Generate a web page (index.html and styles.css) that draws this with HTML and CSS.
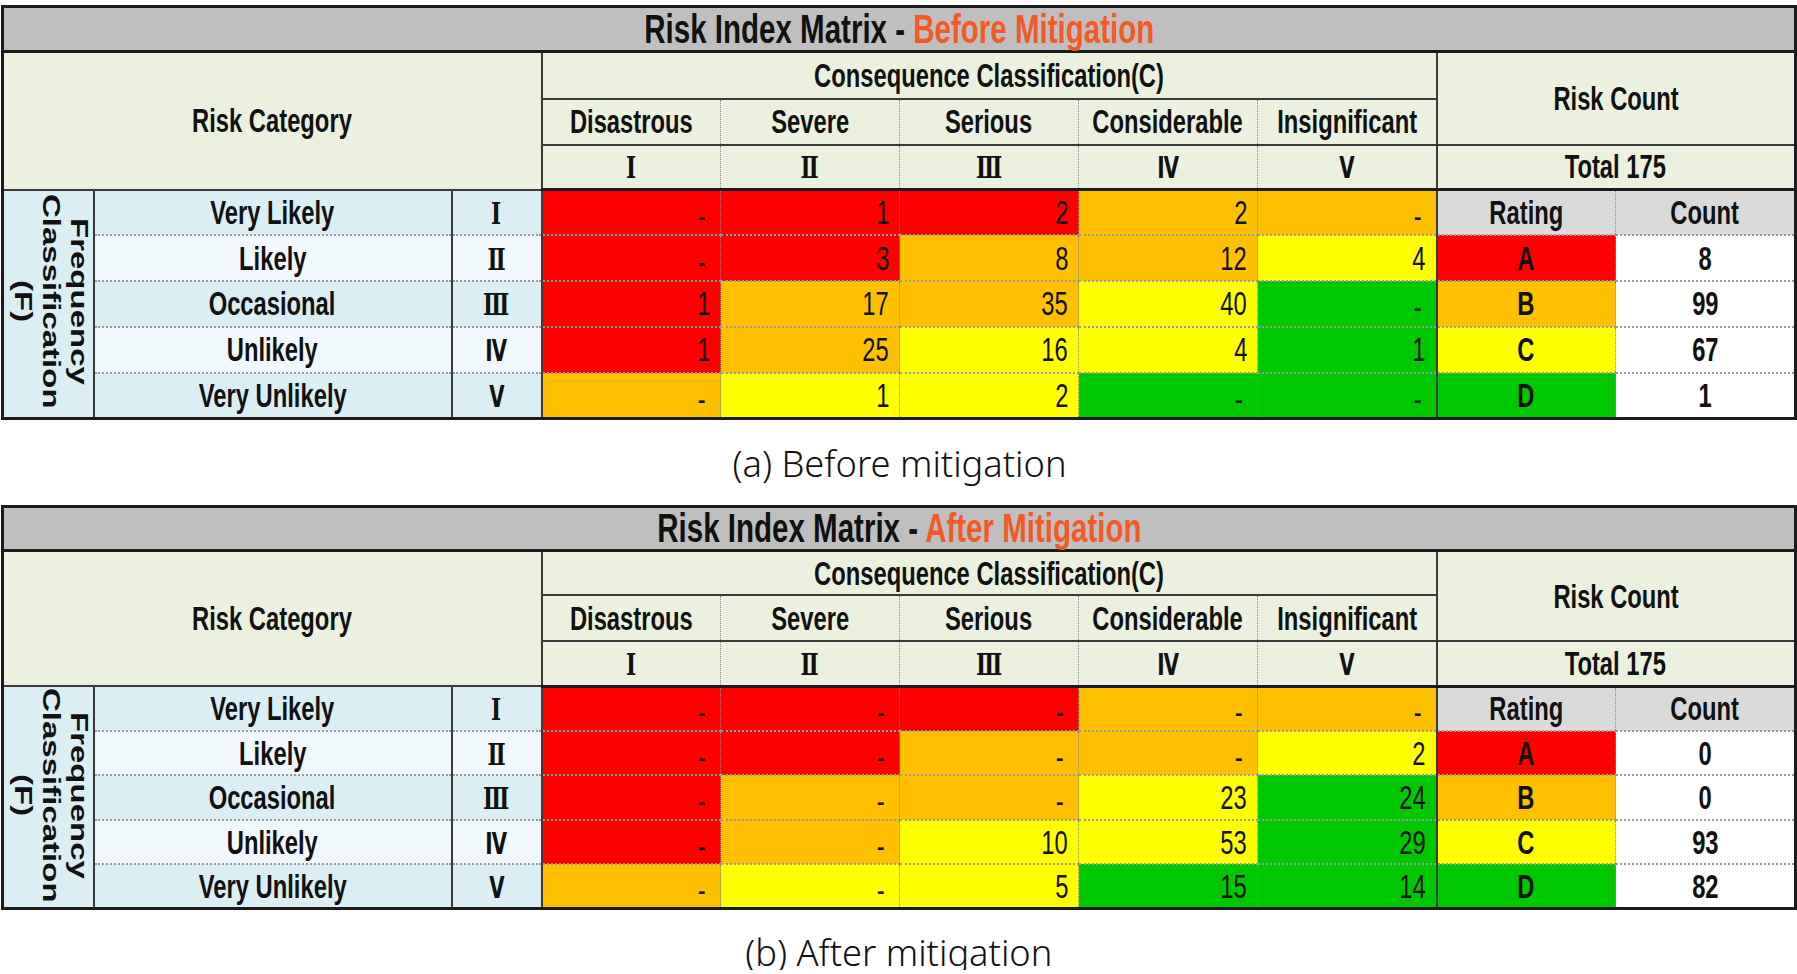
FILE: index.html
```html
<!DOCTYPE html>
<html lang="en">
<head>
<meta charset="utf-8">
<title>Risk Index Matrix</title>
<link rel="stylesheet" href="styles.css">
</head>
<body>
<div class="page">

<section class="fig fig-a">
<table class="matrix m1">
<colgroup>
<col class="c-freq"><col class="c-cat"><col class="c-rom">
<col class="c-con"><col class="c-con"><col class="c-con"><col class="c-con"><col class="c-con">
<col class="c-rat"><col class="c-cnt">
</colgroup>
<tr class="r-title"><th colspan="10" class="title"><span class="sq">Risk Index Matrix - <span class="hl">Before Mitigation</span></span></th></tr>
<tr class="r-h1">
<th colspan="3" rowspan="3" class="hd rc"><span class="sq">Risk Category</span></th>
<th colspan="5" class="hd cons"><span class="sq">Consequence Classification(C)</span></th>
<th colspan="2" rowspan="2" class="hd rcount"><span class="sq">Risk Count</span></th>
</tr>
<tr class="r-h2">
<th class="hd cn"><span class="sq">Disastrous</span></th>
<th class="hd cn"><span class="sq">Severe</span></th>
<th class="hd cn"><span class="sq">Serious</span></th>
<th class="hd cn"><span class="sq">Considerable</span></th>
<th class="hd cn"><span class="sq">Insignificant</span></th>
</tr>
<tr class="r-h3">
<th class="hd rn"><span class="sq rs">Ⅰ</span></th>
<th class="hd rn"><span class="sq rs">Ⅱ</span></th>
<th class="hd rn"><span class="sq rs">Ⅲ</span></th>
<th class="hd rn"><span class="sq rp">Ⅳ</span></th>
<th class="hd rn"><span class="sq rp">Ⅴ</span></th>
<th colspan="2" class="hd total"><span class="sq">Total 175</span></th>
</tr>
<tr class="r-d odd">
<th rowspan="5" class="freq"><div class="vt">Frequency<br>Classification<br>(F)</div></th>
<th class="cat"><span class="sq">Very Likely</span></th><th class="rom"><span class="sq rs">Ⅰ</span></th>
<td class="v red"><span class="sq dash">-</span></td><td class="v red"><span class="sq">1</span></td><td class="v red"><span class="sq">2</span></td><td class="v org"><span class="sq">2</span></td><td class="v org last"><span class="sq dash">-</span></td>
<th class="rh rat"><span class="sq">Rating</span></th><th class="rh cnt"><span class="sq">Count</span></th>
</tr>
<tr class="r-d even">
<th class="cat"><span class="sq">Likely</span></th><th class="rom"><span class="sq rs">Ⅱ</span></th>
<td class="v red"><span class="sq dash">-</span></td><td class="v red"><span class="sq">3</span></td><td class="v org"><span class="sq">8</span></td><td class="v org"><span class="sq">12</span></td><td class="v yel last"><span class="sq">4</span></td>
<td class="rt red"><span class="sq">A</span></td><td class="ct"><span class="sq">8</span></td>
</tr>
<tr class="r-d odd">
<th class="cat"><span class="sq">Occasional</span></th><th class="rom"><span class="sq rs">Ⅲ</span></th>
<td class="v red"><span class="sq">1</span></td><td class="v org"><span class="sq">17</span></td><td class="v org"><span class="sq">35</span></td><td class="v yel"><span class="sq">40</span></td><td class="v grn last"><span class="sq dash">-</span></td>
<td class="rt org"><span class="sq">B</span></td><td class="ct"><span class="sq">99</span></td>
</tr>
<tr class="r-d even">
<th class="cat"><span class="sq">Unlikely</span></th><th class="rom"><span class="sq rp">Ⅳ</span></th>
<td class="v red"><span class="sq">1</span></td><td class="v org"><span class="sq">25</span></td><td class="v yel"><span class="sq">16</span></td><td class="v yel"><span class="sq">4</span></td><td class="v grn last"><span class="sq">1</span></td>
<td class="rt yel"><span class="sq">C</span></td><td class="ct"><span class="sq">67</span></td>
</tr>
<tr class="r-d odd">
<th class="cat"><span class="sq">Very Unlikely</span></th><th class="rom"><span class="sq rp">Ⅴ</span></th>
<td class="v org"><span class="sq dash">-</span></td><td class="v yel"><span class="sq">1</span></td><td class="v yel"><span class="sq">2</span></td><td class="v grn"><span class="sq dash">-</span></td><td class="v grn last"><span class="sq dash">-</span></td>
<td class="rt grn"><span class="sq">D</span></td><td class="ct"><span class="sq">1</span></td>
</tr>
</table>
<p class="caption cap-a"><span class="csq">(a) Before mitigation</span></p>
</section>

<section class="fig fig-b">
<table class="matrix m2">
<colgroup>
<col class="c-freq"><col class="c-cat"><col class="c-rom">
<col class="c-con"><col class="c-con"><col class="c-con"><col class="c-con"><col class="c-con">
<col class="c-rat"><col class="c-cnt">
</colgroup>
<tr class="r-title"><th colspan="10" class="title"><span class="sq">Risk Index Matrix - <span class="hl">After Mitigation</span></span></th></tr>
<tr class="r-h1">
<th colspan="3" rowspan="3" class="hd rc"><span class="sq">Risk Category</span></th>
<th colspan="5" class="hd cons"><span class="sq">Consequence Classification(C)</span></th>
<th colspan="2" rowspan="2" class="hd rcount"><span class="sq">Risk Count</span></th>
</tr>
<tr class="r-h2">
<th class="hd cn"><span class="sq">Disastrous</span></th>
<th class="hd cn"><span class="sq">Severe</span></th>
<th class="hd cn"><span class="sq">Serious</span></th>
<th class="hd cn"><span class="sq">Considerable</span></th>
<th class="hd cn"><span class="sq">Insignificant</span></th>
</tr>
<tr class="r-h3">
<th class="hd rn"><span class="sq rs">Ⅰ</span></th>
<th class="hd rn"><span class="sq rs">Ⅱ</span></th>
<th class="hd rn"><span class="sq rs">Ⅲ</span></th>
<th class="hd rn"><span class="sq rp">Ⅳ</span></th>
<th class="hd rn"><span class="sq rp">Ⅴ</span></th>
<th colspan="2" class="hd total"><span class="sq">Total 175</span></th>
</tr>
<tr class="r-d odd">
<th rowspan="5" class="freq"><div class="vt">Frequency<br>Classification<br>(F)</div></th>
<th class="cat"><span class="sq">Very Likely</span></th><th class="rom"><span class="sq rs">Ⅰ</span></th>
<td class="v red"><span class="sq dash">-</span></td><td class="v red"><span class="sq dash">-</span></td><td class="v red"><span class="sq dash">-</span></td><td class="v org"><span class="sq dash">-</span></td><td class="v org last"><span class="sq dash">-</span></td>
<th class="rh rat"><span class="sq">Rating</span></th><th class="rh cnt"><span class="sq">Count</span></th>
</tr>
<tr class="r-d even">
<th class="cat"><span class="sq">Likely</span></th><th class="rom"><span class="sq rs">Ⅱ</span></th>
<td class="v red"><span class="sq dash">-</span></td><td class="v red"><span class="sq dash">-</span></td><td class="v org"><span class="sq dash">-</span></td><td class="v org"><span class="sq dash">-</span></td><td class="v yel last"><span class="sq">2</span></td>
<td class="rt red"><span class="sq">A</span></td><td class="ct"><span class="sq">0</span></td>
</tr>
<tr class="r-d odd">
<th class="cat"><span class="sq">Occasional</span></th><th class="rom"><span class="sq rs">Ⅲ</span></th>
<td class="v red"><span class="sq dash">-</span></td><td class="v org"><span class="sq dash">-</span></td><td class="v org"><span class="sq dash">-</span></td><td class="v yel"><span class="sq">23</span></td><td class="v grn last"><span class="sq">24</span></td>
<td class="rt org"><span class="sq">B</span></td><td class="ct"><span class="sq">0</span></td>
</tr>
<tr class="r-d even">
<th class="cat"><span class="sq">Unlikely</span></th><th class="rom"><span class="sq rp">Ⅳ</span></th>
<td class="v red"><span class="sq dash">-</span></td><td class="v org"><span class="sq dash">-</span></td><td class="v yel"><span class="sq">10</span></td><td class="v yel"><span class="sq">53</span></td><td class="v grn last"><span class="sq">29</span></td>
<td class="rt yel"><span class="sq">C</span></td><td class="ct"><span class="sq">93</span></td>
</tr>
<tr class="r-d odd">
<th class="cat"><span class="sq">Very Unlikely</span></th><th class="rom"><span class="sq rp">Ⅴ</span></th>
<td class="v org"><span class="sq dash">-</span></td><td class="v yel"><span class="sq dash">-</span></td><td class="v yel"><span class="sq">5</span></td><td class="v grn"><span class="sq">15</span></td><td class="v grn last"><span class="sq">14</span></td>
<td class="rt grn"><span class="sq">D</span></td><td class="ct"><span class="sq">82</span></td>
</tr>
</table>
<p class="caption cap-b"><span class="csq">(b) After mitigation</span></p>
</section>

</div>
</body>
</html>
```

FILE: styles.css
```css
html, body {
  margin: 0;
  padding: 0;
  background: #ffffff;
}

.page {
  padding: 5px 0 0 1px;
  font-family: "Liberation Sans", Arial, sans-serif;
  color: #111111;
}

.fig {
  margin: 0;
}

/* ---------- table ---------- */
.matrix {
  border-collapse: collapse;
  table-layout: fixed;
  width: 1794px;
  border: 3px solid #1c1c1c;
}

.c-freq { width: 91px; }
.c-cat  { width: 358px; }
.c-rom  { width: 90px; }
.c-con  { width: 179px; }
.c-rat  { width: 179px; }
.c-cnt  { width: 180px; }

.matrix th,
.matrix td {
  padding: 0;
  border: 2px solid #3a3a3a;
  text-align: center;
  vertical-align: middle;
  font-weight: 700;
  font-size: 33px;
  line-height: 1;
  white-space: nowrap;
}

.sq {
  display: inline-block;
  margin: 0 -60px;
  transform: scaleX(0.72);
  transform-origin: center center;
  white-space: nowrap;
}

/* roman numerals */
.rs {
  font-family: "DejaVu Serif", "Liberation Serif", serif;
  font-weight: 700;
  font-size: 30px;
}
.rp {
  font-family: "Liberation Sans", "DejaVu Sans", sans-serif;
  font-weight: 700;
  font-size: 31px;
  transform: scaleX(0.64);
}

/* title */
.m1 .r-title { height: 45px; }
.m2 .r-title { height: 43px; }

.title {
  background: #bfbfbf;
  font-size: 41px !important;
  border-bottom: 3px solid #1c1c1c !important;
}
.title .hl {
  color: #f25a24;
}

/* header rows */
.m1 .r-h1 { height: 47px; }
.m1 .r-h2 { height: 46px; }
.m1 .r-h3 { height: 45px; }
.m2 .r-h1 { height: 45px; }
.m2 .r-h2 { height: 46px; }
.m2 .r-h3 { height: 45px; }

.hd {
  background: #ebf1de;
}

.rc {
  border-right: 2px solid #3a3a3a;
  border-bottom: 3px solid #1c1c1c;
}

.cons {
  border-bottom: 2px solid #3a3a3a;
}

.cn,
.rn {
  border-left: 1px dotted #8a8a8a !important;
  border-right: 1px dotted #8a8a8a !important;
}
.r-h2 .cn:first-child { border-left: 2px solid #3a3a3a !important; }
.r-h3 .rn:first-child { border-left: 2px solid #3a3a3a !important; }
.r-h2 .cn:last-child,
.r-h3 .rn:nth-child(5) { border-right: 2px solid #3a3a3a !important; }

.r-h3 th {
  border-bottom: 3px solid #1c1c1c;
}

/* data rows */
.m1 .r-d { height: 45.8px; }
.m2 .r-d { height: 44.5px; }

.freq {
  background: #daeef3;
  border-right: 2px solid #3a3a3a;
}

.vt {
  writing-mode: vertical-rl;
  display: inline-block;
  margin: 0 -17px 0 -11px;
  font-size: 33px;
  line-height: 1.15;
  text-align: center;
  transform: scaleX(0.74);
}

.cat,
.rom {
  border-top: 2px dotted #9a9a9a !important;
  border-bottom: 2px dotted #9a9a9a !important;
}
.odd .cat, .odd .rom { background: #daeef3; }
.even .cat, .even .rom { background: #f1f8fb; }

.cat {
  border-right: 1px solid #555555 !important;
}
.rom {
  border-right: 2px solid #3a3a3a !important;
}

.v {
  text-align: right !important;
  font-weight: 400 !important;
  border-left: 1px dotted #8a8a8a !important;
  border-right: 1px dotted #8a8a8a !important;
  border-top: 2px dotted #9a9a9a !important;
  border-bottom: 2px dotted #9a9a9a !important;
  padding-right: 10px !important;
}
.v .sq {
  margin: 0;
  transform-origin: right center;
}
.v .dash {
  padding-right: 6px;
  position: relative;
  top: 4px;
}
.r-d .v:nth-child(3),
.r-d:first-child .v:nth-child(4) {
  border-left: 2px solid #3a3a3a !important;
}
.v.last {
  border-right: 2px solid #3a3a3a !important;
}

.red { background: #ff0000; }
.org { background: #ffc000; }
.yel { background: #ffff00; }
.grn { background: #00c800; }

.rh {
  background: #d9d9d9;
  border-top: 3px solid #1c1c1c;
  border-bottom: 2px dotted #9a9a9a !important;
}
.rh.rat,
.rt {
  border-left: 2px solid #3a3a3a !important;
  border-right: 1px dotted #8a8a8a !important;
}
.rh.cnt,
.ct {
  border-left: 1px dotted #8a8a8a !important;
}
.rt,
.ct {
  border-top: 2px dotted #9a9a9a !important;
  border-bottom: 2px dotted #9a9a9a !important;
}
.ct {
  background: #ffffff;
}

/* captions */
.caption {
  margin: 0;
  text-align: center;
  font-family: "Noto Sans", "Open Sans", sans-serif;
  font-weight: 300;
  font-size: 37px;
  line-height: 1;
  color: #111111;
}
.csq {
  display: inline-block;
  transform: scaleX(0.98);
}
.cap-a {
  padding: 24px 0 24px;
}
.cap-b {
  padding: 23px 0 0;
}
```
